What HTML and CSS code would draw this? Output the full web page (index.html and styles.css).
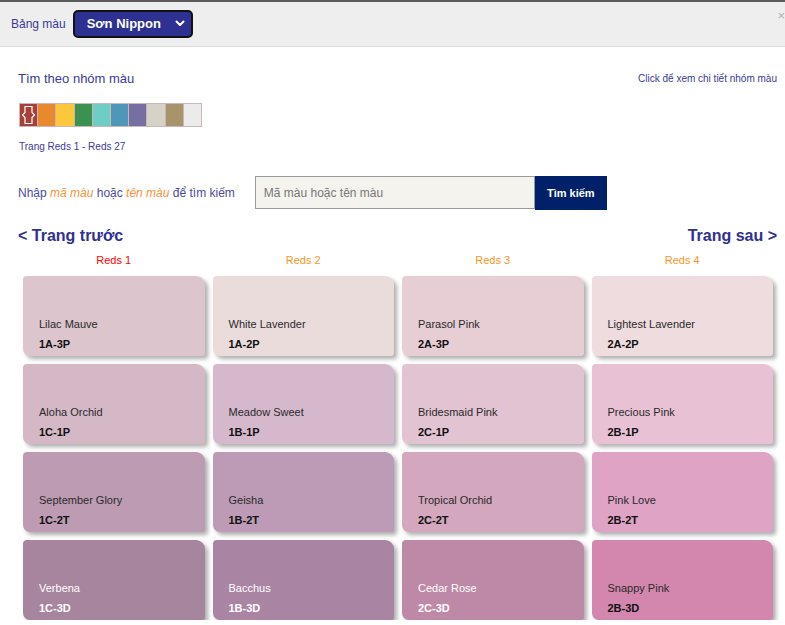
FILE: index.html
```html
<!DOCTYPE html>
<html lang="vi">
<head>
<meta charset="utf-8">
<title>Bảng màu</title>
<link rel="stylesheet" href="styles.css">
</head>
<body>
<header class="topbar">
  <span class="topbar-label">Bảng màu</span>
  <div class="brand-select">
    <span>Sơn Nippon</span>
    <svg class="chev" width="10" height="7" viewBox="0 0 10 7"><path d="M1.5 1.5 L5 5 L8.5 1.5" fill="none" stroke="#fff" stroke-width="2" stroke-linecap="round" stroke-linejoin="round"/></svg>
  </div>
  <span class="close">×</span>
</header>

<main class="content">
  <div class="title-row">
    <span class="title">Tìm theo nhóm màu</span>
    <span class="hint">Click để xem chi tiết nhóm màu</span>
  </div>

  <div class="swatches">
    <div class="sw sw-red">
      <svg width="15" height="20" viewBox="0 0 15 20"><path d="M4 1.5 H11 V7.5 L13.5 10 L11 12.5 V18.5 H4 V12.5 L1.5 10 L4 7.5 Z" fill="none" stroke="#fff" stroke-width="1.2"/></svg>
    </div>
    <div class="sw sw-orange"></div>
    <div class="sw sw-yellow"></div>
    <div class="sw sw-green"></div>
    <div class="sw sw-teal"></div>
    <div class="sw sw-blue"></div>
    <div class="sw sw-purple"></div>
    <div class="sw sw-grey"></div>
    <div class="sw sw-tan"></div>
    <div class="sw sw-white"></div>
  </div>

  <p class="range">Trang Reds 1 - Reds 27</p>

  <div class="search-row">
    <span class="search-label">Nhập <em>mã màu</em> hoặc <em>tên màu</em> để tìm kiếm</span>
    <input class="search-input" type="text" placeholder="Mã màu hoặc tên màu">
    <button class="search-btn">Tìm kiếm</button>
  </div>

  <div class="nav-row">
    <span>&lt; Trang trước</span>
    <span>Trang sau &gt;</span>
  </div>

  <div class="grid heads">
    <div class="head current">Reds 1</div>
    <div class="head">Reds 2</div>
    <div class="head">Reds 3</div>
    <div class="head">Reds 4</div>
  </div>

  <div class="grid cards">
    <div class="card c-lilac"><div class="name">Lilac Mauve</div><div class="code">1A-3P</div></div>
    <div class="card c-whitelav"><div class="name">White Lavender</div><div class="code">1A-2P</div></div>
    <div class="card c-parasol"><div class="name">Parasol Pink</div><div class="code">2A-3P</div></div>
    <div class="card c-lightest"><div class="name">Lightest Lavender</div><div class="code">2A-2P</div></div>

    <div class="card c-aloha"><div class="name">Aloha Orchid</div><div class="code">1C-1P</div></div>
    <div class="card c-meadow"><div class="name">Meadow Sweet</div><div class="code">1B-1P</div></div>
    <div class="card c-brides"><div class="name">Bridesmaid Pink</div><div class="code">2C-1P</div></div>
    <div class="card c-precious"><div class="name">Precious Pink</div><div class="code">2B-1P</div></div>

    <div class="card c-sept"><div class="name">September Glory</div><div class="code">1C-2T</div></div>
    <div class="card c-geisha"><div class="name">Geisha</div><div class="code">1B-2T</div></div>
    <div class="card c-tropical"><div class="name">Tropical Orchid</div><div class="code">2C-2T</div></div>
    <div class="card c-pinklove"><div class="name">Pink Love</div><div class="code">2B-2T</div></div>

    <div class="card c-verbena light"><div class="name">Verbena</div><div class="code">1C-3D</div></div>
    <div class="card c-bacchus light"><div class="name">Bacchus</div><div class="code">1B-3D</div></div>
    <div class="card c-cedar light"><div class="name">Cedar Rose</div><div class="code">2C-3D</div></div>
    <div class="card c-snappy"><div class="name">Snappy Pink</div><div class="code">2B-3D</div></div>
  </div>
</main>
</body>
</html>
```

FILE: styles.css
```css
* { box-sizing: border-box; }

html, body {
  margin: 0;
  padding: 0;
  background: #fff;
  font-family: "Liberation Sans", Arial, sans-serif;
  overflow: hidden;
}

.topbar {
  position: relative;
  display: flex;
  align-items: center;
  gap: 7px;
  height: 47px;
  padding-left: 11px;
  background: #eeeeee;
  border-top: 2px solid #5a5a5a;
  border-bottom: 1px solid #dcdcdc;
}

.topbar-label {
  font-size: 12px;
  color: #3b3b9b;
}

.brand-select {
  display: flex;
  align-items: center;
  justify-content: space-between;
  width: 120px;
  height: 28px;
  margin-top: -1px;
  padding: 0 6px 0 12px;
  background: #2e3192;
  border: 2px solid #111;
  border-radius: 5px;
  color: #fff;
  font-weight: bold;
  font-size: 13px;
}

.close {
  position: absolute;
  right: 0;
  top: 7px;
  font-size: 13px;
  color: #b0b0b0;
  line-height: 14px;
}

.content {
  padding: 0 8px 0 18px;
}

.title-row {
  display: flex;
  justify-content: space-between;
  align-items: center;
  margin-top: 23px;
  height: 16px;
}

.title {
  font-size: 13px;
  color: #3a3a9a;
}

.hint {
  font-size: 10px;
  color: #3a3a9a;
}

.swatches {
  display: flex;
  width: 183px;
  height: 24px;
  margin-top: 17px;
  margin-left: 1px;
  border: 1px solid #c9b6b6;
  background: #c9b6b6;
  gap: 1px;
}

.sw {
  flex: 1;
  display: flex;
  align-items: center;
  justify-content: center;
}
.sw-red { background: #a8403a; }
.sw-orange { background: #e8892d; }
.sw-yellow { background: #fcc73d; }
.sw-green { background: #3a9150; }
.sw-teal { background: #6ecdc5; }
.sw-blue { background: #4f97b8; }
.sw-purple { background: #7670a2; }
.sw-grey { background: #d6d2c8; }
.sw-tan { background: #a8936a; }
.sw-white { background: #ebebeb; }

.range {
  margin: 14px 0 0 1px;
  font-size: 10px;
  line-height: 12px;
  color: #3a3a9a;
}

.search-row {
  display: flex;
  align-items: center;
  margin-top: 23px;
  height: 33px;
}

.search-label {
  font-size: 12px;
  color: #4a4aa8;
  margin-right: 20px;
}
.search-label em {
  color: #f7923a;
}

.search-input {
  width: 280px;
  height: 33px;
  padding: 0 8px;
  margin: 0;
  border: 1px solid #9a9a9a;
  background: #f4f3ee;
  font-family: "Liberation Sans", Arial, sans-serif;
  font-size: 12px;
  color: #555;
  outline: none;
}
.search-input::placeholder { color: #777; }

.search-btn {
  width: 72px;
  height: 34px;
  margin: 0;
  border: 0;
  background: #00206a;
  color: #fff;
  font-family: "Liberation Sans", Arial, sans-serif;
  font-weight: bold;
  font-size: 11px;
}

.nav-row {
  display: flex;
  justify-content: space-between;
  margin-top: 17px;
  font-size: 16px;
  line-height: 20px;
  font-weight: bold;
  color: #2e3192;
}

.grid {
  display: grid;
  grid-template-columns: repeat(4, 1fr);
  column-gap: 8px;
  margin: 0 4px 0 5px;
}

.heads {
  margin-top: 7px;
}

.head {
  text-align: center;
  font-size: 11px;
  line-height: 14px;
  color: #f7941d;
}
.head.current { color: #ff0000; }

.cards {
  margin-top: 9px;
  row-gap: 8px;
}

.card {
  height: 80px;
  padding: 41px 0 0 16px;
  border-radius: 4px 9px 3px 7px;
  box-shadow: 3px 3px 4px rgba(0, 0, 0, 0.32);
  color: #2a2a2a;
  font-size: 11px;
}

.card .name { line-height: 14px; }
.card .code { line-height: 14px; margin-top: 6px; font-weight: bold; color: #111; }
.card.light .name,
.card.light .code { color: #fff; }

.c-lilac { background: #dcc5cd; }
.c-whitelav { background: #ebdcdc; }
.c-parasol { background: #e7ced4; }
.c-lightest { background: #efdcde; }
.c-aloha { background: #d4b8c6; }
.c-meadow { background: #d6b8cc; }
.c-brides { background: #e2c3d1; }
.c-precious { background: #e8c1d5; }
.c-sept { background: #bd9cb3; }
.c-geisha { background: #bd9bb6; }
.c-tropical { background: #d3a7be; }
.c-pinklove { background: #dea3c5; }
.c-verbena { background: #a7859e; }
.c-bacchus { background: #a985a3; }
.c-cedar { background: #be89a6; }
.c-snappy { background: #d487ae; }
```
